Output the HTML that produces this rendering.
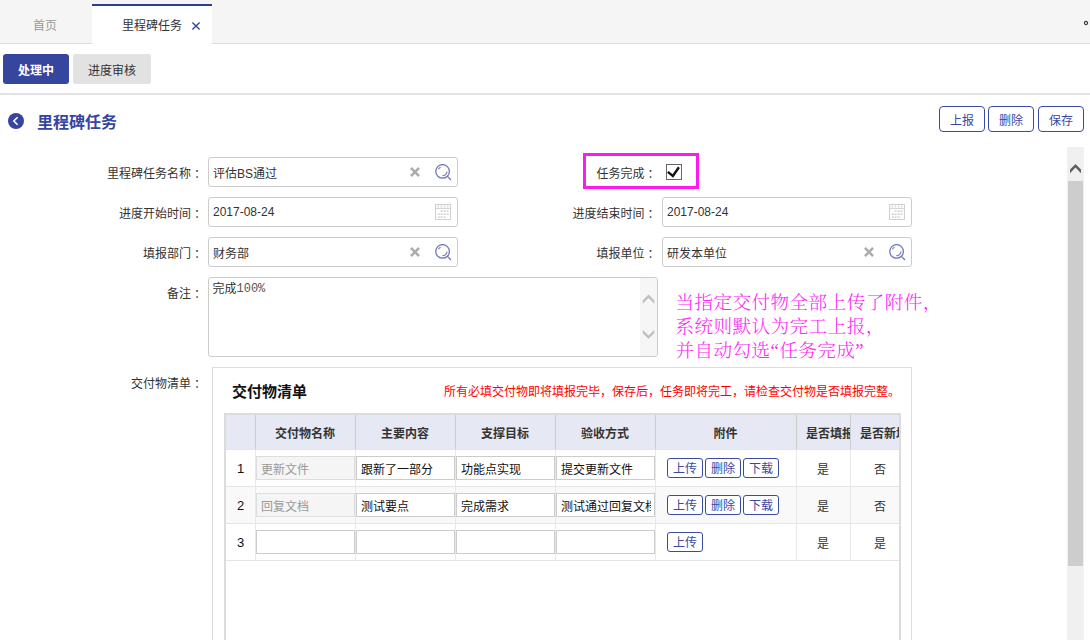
<!DOCTYPE html>
<html lang="zh-CN">
<head>
<meta charset="utf-8">
<title>里程碑任务</title>
<style>
*{box-sizing:border-box;margin:0;padding:0}
html,body{width:1090px;height:640px;overflow:hidden;background:#fff}
body{position:relative;font:12px/16px "Liberation Sans","Noto Sans CJK SC",sans-serif;color:#333}
.abs{position:absolute}
.t{position:absolute;white-space:nowrap;line-height:16px;height:16px}
/* tab bar */
#tabbar{left:0;top:0;width:1090px;height:44px;background:#f5f5f5;border-bottom:1px solid #dcdcdc}
#tabact{left:92px;top:4px;width:120px;height:40px;background:#fff;border-top:2px solid #2f3c96}
/* state buttons */
.sbtn{position:absolute;top:54px;height:30px;border-radius:3px;text-align:center;line-height:30px;padding-top:2px;font-size:12px}
#hr1{left:0;top:93px;width:1090px;height:2px;background:#e2e2e2}
/* top-right buttons */
.obtn{position:absolute;top:106px;width:46px;height:26px;border:1px solid #3b4aa3;border-radius:4px;color:#3a48a2;text-align:center;line-height:24px;padding-top:2px;background:#fff}
/* form */
.lbl{position:absolute;width:110px;text-align:right;line-height:16px;height:16px;color:#333;white-space:nowrap}
.inp{position:absolute;width:250px;height:30px;border:1px solid #ccc;border-radius:3px;background:#fff;padding-left:4px;padding-top:2px;line-height:28px;color:#333}
.ico{position:absolute}
.co{position:relative;left:3px}
/* grid */
.th{position:absolute;top:415px;height:34px;line-height:34px;padding-top:2px;padding-right:1px;font-weight:bold;text-align:center;color:#333;border-left:1px solid #ccc;overflow:hidden;white-space:nowrap}
.gi{position:absolute;width:99px;height:24px;border:1px solid #ccc;background:#fff;line-height:22px;padding-left:4px;padding-top:2px;color:#111;overflow:hidden;white-space:nowrap}
.gi.dis{background:#f5f5f5;color:#999;border-color:#ddd}
.gb{position:absolute;width:36px;height:20px;border:1px solid #3b4aa3;border-radius:3px;color:#3a48a2;text-align:center;line-height:18px;padding-top:1px;background:#fff}
.yn{position:absolute;width:24px;text-align:center;line-height:16px;color:#333}
.rn{position:absolute;left:226px;width:29px;text-align:center;line-height:16px;font-size:13px;color:#111}
</style>
</head>
<body>
<!-- TAB BAR -->
<div id="tabbar" class="abs"></div>
<div id="tabact" class="abs"></div>
<div class="t" style="left:33px;top:18px;color:#999">首页</div>
<div class="t" style="left:122px;top:18px;color:#333">里程碑任务</div>
<svg class="abs" style="left:191px;top:21px" width="10" height="10" viewBox="0 0 10 10"><path d="M1.4 1.4 L8.6 8.6 M8.6 1.4 L1.4 8.6" stroke="#3646a0" stroke-width="1.4" fill="none"/></svg>
<svg class="abs" style="left:1083px;top:20px" width="6" height="6" viewBox="0 0 6 6"><circle cx="3" cy="3" r="1.6" fill="none" stroke="#333" stroke-width="1.1"/></svg>

<!-- STATE BUTTONS -->
<div class="sbtn" style="left:3px;width:66px;background:#36459e;color:#fff;font-weight:bold">处理中</div>
<div class="sbtn" style="left:73px;width:78px;background:#e2e2e2;color:#333">进度审核</div>
<div id="hr1" class="abs"></div>

<!-- TITLE -->
<svg class="abs" style="left:8px;top:113px" width="16" height="16" viewBox="0 0 16 16"><circle cx="8" cy="8" r="8" fill="#36459e"/><path d="M9.6 4.2 L5.8 8 L9.6 11.8" stroke="#fff" stroke-width="1.6" fill="none"/></svg>
<div class="t" style="left:37px;top:111px;font-size:16px;line-height:24px;height:24px;font-weight:bold;color:#3545a0">里程碑任务</div>
<div class="obtn" style="left:939px">上报</div>
<div class="obtn" style="left:988px">删除</div>
<div class="obtn" style="left:1038px">保存</div>

<!-- FORM LEFT -->
<div class="lbl" style="left:93px;top:166px">里程碑任务名称<span class="co">：</span></div>
<div class="inp" style="left:208px;top:157px">评估BS通过</div>
<div class="lbl" style="left:93px;top:206px">进度开始时间<span class="co">：</span></div>
<div class="inp" style="left:208px;top:197px;padding-top:0">2017-08-24</div>
<div class="lbl" style="left:93px;top:246px">填报部门<span class="co">：</span></div>
<div class="inp" style="left:208px;top:237px">财务部</div>
<div class="lbl" style="left:93px;top:286px">备注<span class="co">：</span></div>
<div class="abs" style="left:208px;top:277px;width:450px;height:80px;border:1px solid #ccc;border-radius:3px;background:#fff;overflow:hidden">
  <div class="t" style="left:3.5px;top:3px;color:#333">完成<span style="font-family:'Liberation Mono',monospace;font-size:12px;color:#555;position:relative;top:-1px">100%</span></div>
  <div class="abs" style="left:431px;top:0;width:17px;height:78px;background:#f6f6f6"></div>
  <svg class="abs" style="left:431px;top:0" width="17" height="78" viewBox="0 0 17 78"><path d="M2.8 22.2 L8.5 16.4 L14.3 22.2 L14.3 25.8 L8.5 20 L2.8 25.8 Z M2.8 51.7 L8.5 57.4 L14.3 51.7 L14.3 55.3 L8.5 61.1 L2.8 55.3 Z" fill="#c1c1c1"/></svg>
</div>

<!-- FORM RIGHT -->
<div class="abs" style="left:583px;top:153px;width:116px;height:36px;border:3px solid #fb1bf0"></div>
<div class="lbl" style="left:546.5px;top:166px">任务完成<span class="co">：</span></div>
<div class="abs" style="left:666px;top:164px;width:16px;height:16px;border:1px solid #666;background:#fff"></div>
<svg class="abs" style="left:666px;top:164px" width="16" height="16" viewBox="0 0 16 16"><path d="M1.8 7.9 L6.9 11.9 L12.9 3.3" stroke="#111" stroke-width="2.4" fill="none"/></svg>
<div class="lbl" style="left:546.5px;top:206px">进度结束时间<span class="co">：</span></div>
<div class="inp" style="left:662px;top:197px;padding-top:0">2017-08-24</div>
<div class="lbl" style="left:546.5px;top:246px">填报单位<span class="co">：</span></div>
<div class="inp" style="left:662px;top:237px">研发本单位</div>

<!-- ICONS -->
<svg class="ico" style="left:410px;top:167px" width="10" height="10"><path d="M0.9 0.9 L9.1 9.1 M9.1 0.9 L0.9 9.1" stroke="#adadad" stroke-width="2.6" fill="none"/></svg>
<svg class="ico" style="left:435px;top:164px" width="17" height="17"><circle cx="7.6" cy="7.4" r="6.8" fill="none" stroke="#707abd" stroke-width="1.3"/><path d="M12.4 12.4 L16 16" stroke="#6f79bb" stroke-width="1.3"/><path d="M3.4 5.2 A4.6 4.6 0 0 1 5.6 3.2 M7.2 11.8 A4.5 4.5 0 0 0 12 7.4" stroke="#707abd" stroke-width="1.1" fill="none"/></svg>
<svg class="ico" style="left:435px;top:204px" width="16" height="16"><rect x="0.5" y="0.5" width="15" height="15" fill="#fff" stroke="#d0d0d0"/><path d="M0.5 4.4 H15.5" stroke="#d0d0d0"/><path d="M3.2 1.2 V3.6 M6.4 1.2 V3.6 M9.6 1.2 V3.6 M12.8 1.2 V3.6" stroke="#dcdcdc" stroke-width="1.4"/><g fill="#d4d4d4"><rect x="5.6" y="6.3" width="2" height="1.6"/><rect x="8.6" y="6.3" width="2" height="1.6"/><rect x="11.6" y="6.3" width="2" height="1.6"/><rect x="2.8" y="9.4" width="2" height="1.6"/><rect x="5.6" y="9.4" width="2" height="1.6"/><rect x="8.6" y="9.4" width="2" height="1.6"/><rect x="11.6" y="9.4" width="2" height="1.6"/><rect x="2.8" y="12.3" width="2" height="1.6"/><rect x="5.6" y="12.3" width="2" height="1.6"/><rect x="8.6" y="12.3" width="2" height="1.6"/></g></svg>
<svg class="ico" style="left:410px;top:247px" width="10" height="10"><path d="M0.9 0.9 L9.1 9.1 M9.1 0.9 L0.9 9.1" stroke="#adadad" stroke-width="2.6" fill="none"/></svg>
<svg class="ico" style="left:435px;top:244px" width="17" height="17"><circle cx="7.6" cy="7.4" r="6.8" fill="none" stroke="#707abd" stroke-width="1.3"/><path d="M12.4 12.4 L16 16" stroke="#6f79bb" stroke-width="1.3"/><path d="M3.4 5.2 A4.6 4.6 0 0 1 5.6 3.2 M7.2 11.8 A4.5 4.5 0 0 0 12 7.4" stroke="#707abd" stroke-width="1.1" fill="none"/></svg>
<svg class="ico" style="left:889px;top:204px" width="16" height="16"><rect x="0.5" y="0.5" width="15" height="15" fill="#fff" stroke="#d0d0d0"/><path d="M0.5 4.4 H15.5" stroke="#d0d0d0"/><path d="M3.2 1.2 V3.6 M6.4 1.2 V3.6 M9.6 1.2 V3.6 M12.8 1.2 V3.6" stroke="#dcdcdc" stroke-width="1.4"/><g fill="#d4d4d4"><rect x="5.6" y="6.3" width="2" height="1.6"/><rect x="8.6" y="6.3" width="2" height="1.6"/><rect x="11.6" y="6.3" width="2" height="1.6"/><rect x="2.8" y="9.4" width="2" height="1.6"/><rect x="5.6" y="9.4" width="2" height="1.6"/><rect x="8.6" y="9.4" width="2" height="1.6"/><rect x="11.6" y="9.4" width="2" height="1.6"/><rect x="2.8" y="12.3" width="2" height="1.6"/><rect x="5.6" y="12.3" width="2" height="1.6"/><rect x="8.6" y="12.3" width="2" height="1.6"/></g></svg>
<svg class="ico" style="left:864px;top:247px" width="10" height="10"><path d="M0.9 0.9 L9.1 9.1 M9.1 0.9 L0.9 9.1" stroke="#adadad" stroke-width="2.6" fill="none"/></svg>
<svg class="ico" style="left:889px;top:244px" width="17" height="17"><circle cx="7.6" cy="7.4" r="6.8" fill="none" stroke="#707abd" stroke-width="1.3"/><path d="M12.4 12.4 L16 16" stroke="#6f79bb" stroke-width="1.3"/><path d="M3.4 5.2 A4.6 4.6 0 0 1 5.6 3.2 M7.2 11.8 A4.5 4.5 0 0 0 12 7.4" stroke="#707abd" stroke-width="1.1" fill="none"/></svg>

<!-- MAGENTA NOTE -->
<div class="abs" style="left:675.5px;top:291px;font-family:'Liberation Serif','Noto Serif CJK SC',serif;font-size:18.67px;letter-spacing:0.36px;line-height:24px;font-weight:300;color:#fc26f3;white-space:nowrap">当指定交付物全部上传了附件，<br>系统则默认为完工上报，<br>并自动勾选“任务完成”</div>

<!-- DELIVERABLE PANEL -->
<div class="lbl" style="left:93px;top:376px">交付物清单<span class="co">：</span></div>
<div class="abs" style="left:212px;top:367px;width:700px;height:300px;border:1px solid #ddd;background:#fff"></div>
<div class="t" style="left:232px;top:381px;font-size:15px;line-height:22px;height:22px;font-weight:bold;color:#111">交付物清单</div>
<div class="t" style="left:444px;top:384px;color:#f00">所有必填交付物即将填报完毕，保存后，任务即将完工，请检查交付物是否填报完整。</div>

<!-- GRID -->
<div class="abs" style="left:224px;top:413px;width:677px;height:240px;border:2px solid #dcdcdc;border-bottom:0;overflow:hidden"></div>
<div class="abs" style="left:226px;top:415px;width:673px;height:34px;background:#e6e9f4"></div>
<div class="th" style="left:255px;width:100px">交付物名称</div>
<div class="th" style="left:355px;width:100px">主要内容</div>
<div class="th" style="left:455px;width:100px">支撑目标</div>
<div class="th" style="left:555px;width:100px">验收方式</div>
<div class="th" style="left:655px;width:141px">附件</div>
<div class="th" style="left:796px;width:54px;text-align:left;padding-left:9px">是否填报</div>
<div class="th" style="left:850px;width:49px;text-align:left;padding-left:9px">是否新增</div>
<!-- rows -->
<div class="abs" style="left:226px;top:449px;width:673px;height:1px;background:#e4e4e4"></div>
<div class="abs" style="left:226px;top:487px;width:673px;height:36px;background:#f9f9f9"></div>
<div class="abs" style="left:226px;top:486px;width:673px;height:1px;background:#e4e4e4"></div>
<div class="abs" style="left:226px;top:523px;width:673px;height:1px;background:#e4e4e4"></div>
<div class="abs" style="left:226px;top:560px;width:673px;height:1px;background:#e4e4e4"></div>
<!-- body column lines -->
<div class="abs" style="left:255px;top:450px;width:1px;height:110px;background:#e8e8e8"></div>
<div class="abs" style="left:355px;top:450px;width:1px;height:110px;background:#e8e8e8"></div>
<div class="abs" style="left:455px;top:450px;width:1px;height:110px;background:#e8e8e8"></div>
<div class="abs" style="left:555px;top:450px;width:1px;height:110px;background:#e8e8e8"></div>
<div class="abs" style="left:655px;top:450px;width:1px;height:110px;background:#e8e8e8"></div>
<div class="abs" style="left:796px;top:450px;width:1px;height:110px;background:#e8e8e8"></div>
<div class="abs" style="left:850px;top:450px;width:1px;height:110px;background:#e8e8e8"></div>

<!-- row 1 -->
<div class="rn" style="top:461px">1</div>
<div class="gi dis" style="left:256px;top:456px">更新文件</div>
<div class="gi" style="left:356px;top:456px">跟新了一部分</div>
<div class="gi" style="left:456px;top:456px">功能点实现</div>
<div class="gi" style="left:556px;top:456px">提交更新文件</div>
<div class="gb" style="left:667px;top:458px">上传</div>
<div class="gb" style="left:705px;top:458px">删除</div>
<div class="gb" style="left:743px;top:458px">下载</div>
<div class="yn" style="left:811px;top:462px">是</div>
<div class="yn" style="left:868px;top:462px">否</div>
<!-- row 2 -->
<div class="rn" style="top:498px">2</div>
<div class="gi dis" style="left:256px;top:493px">回复文档</div>
<div class="gi" style="left:356px;top:493px">测试要点</div>
<div class="gi" style="left:456px;top:493px">完成需求</div>
<div class="gi" style="left:556px;top:493px"><div style="width:90px;overflow:hidden">测试通过回复文档</div></div>
<div class="gb" style="left:667px;top:495px">上传</div>
<div class="gb" style="left:705px;top:495px">删除</div>
<div class="gb" style="left:743px;top:495px">下载</div>
<div class="yn" style="left:811px;top:499px">是</div>
<div class="yn" style="left:868px;top:499px">否</div>
<!-- row 3 -->
<div class="rn" style="top:535px">3</div>
<div class="gi" style="left:256px;top:530px"></div>
<div class="gi" style="left:356px;top:530px"></div>
<div class="gi" style="left:456px;top:530px"></div>
<div class="gi" style="left:556px;top:530px"></div>
<div class="gb" style="left:667px;top:532px">上传</div>
<div class="yn" style="left:811px;top:536px">是</div>
<div class="yn" style="left:868px;top:536px">是</div>

<!-- PAGE SCROLLBAR -->
<div class="abs" style="left:1067px;top:147px;width:17px;height:493px;background:#f0f0f0"></div>
<div class="abs" style="left:1068px;top:181px;width:15px;height:385px;background:#cdcdcd"></div>
<svg class="abs" style="left:1067px;top:160px" width="17" height="17" viewBox="0 0 17 17"><path d="M3 9.6 L8.5 3.9 L14 9.6 L14 13.2 L8.5 7.6 L3 13.2 Z" fill="#606060"/></svg>
</body>
</html>
